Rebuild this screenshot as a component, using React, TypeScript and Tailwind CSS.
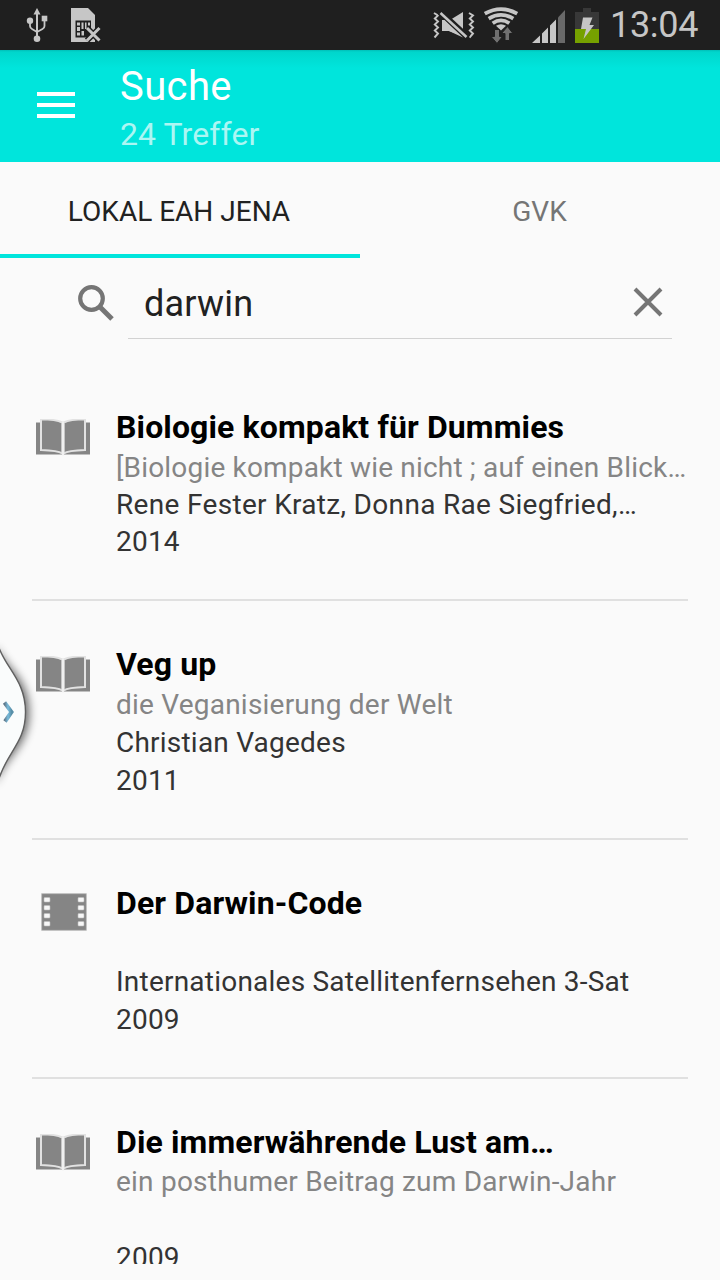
import React from "react";

type Kind = "book" | "film";
type Item = {
  kind: Kind;
  title: string;
  subtitle: string;
  author: string;
  year: string;
  compact?: boolean;
};

const items: Item[] = [
  {
    kind: "book",
    title: "Biologie kompakt für Dummies",
    subtitle: "[Biologie kompakt wie nicht ; auf einen Blick…",
    author: "Rene Fester Kratz, Donna Rae Siegfried,…",
    year: "2014",
    compact: true,
  },
  { kind: "book", title: "Veg up", subtitle: "die Veganisierung der Welt", author: "Christian Vagedes", year: "2011" },
  { kind: "film", title: "Der Darwin-Code", subtitle: "", author: "Internationales Satellitenfernsehen 3-Sat", year: "2009" },
  { kind: "book", title: "Die immerwährende Lust am…", subtitle: "ein posthumer Beitrag zum Darwin-Jahr", author: "", year: "2009" },
];

function BookIcon() {
  return (
    <svg width="56" height="38" viewBox="0 0 56 38" fill="#858585">
      <path d="M1 3.500H6V31H22L27.500 33.500V35.500H1Z" />
      <path d="M55 3.500H50V31H34L28.500 33.500V35.500H55Z" />
      <g stroke="#e2e2e2" strokeWidth="2">
        <path d="M6 .3Q21 .3 27.300 3.500V34.500Q23 31.500 6 31Z" />
        <path d="M50 .3Q35 .3 28.700 3.500V34.500Q33 31.500 50 31Z" />
      </g>
      <path d="M28 3V36" stroke="#f2f2f2" strokeWidth="1.800" />
    </svg>
  );
}

function FilmIcon() {
  return (
    <svg width="46" height="38" viewBox="0 0 46 38">
      <rect x=".7" y=".7" width="44.600" height="36.600" fill="#858585" stroke="#bdbdbd" strokeWidth=".8" />
      <g fill="#f7f7f7" stroke="#bcbcbc" strokeWidth=".6">
        {[4.5, 12.5, 20.5, 28.5].map((y) => (
          <React.Fragment key={y}>
            <rect x="3" y={y} width="6" height="4.500" rx=".8" />
            <rect x="37" y={y} width="6" height="4.500" rx=".8" />
          </React.Fragment>
        ))}
      </g>
    </svg>
  );
}

function StatusBar() {
  return (
    <div className="flex h-[50px] shrink-0 items-center bg-[#1f1f1f]">
      <svg width="120" height="50" viewBox="0 0 120 50" fill="#c6c6c6">
        <g stroke="#c6c6c6" strokeWidth="1.800" fill="none">
          <path d="M37 13V37" strokeWidth="2" />
          <path d="M30 21V26Q30 28 32 29L37 32L42.500 29Q44.500 28 44.500 26V19" />
        </g>
        <path d="M37 8L40.500 14.500H33.500Z" />
        <circle cx="30" cy="20.700" r="3.200" />
        <rect x="41.700" y="15.700" width="5.600" height="5.600" />
        <circle cx="37" cy="38.700" r="3.300" />
        <path d="M71 8H88L95 15V42H71Z" />
        <path d="M75.500 20.500H91V37.500H75.500Z" fill="#1f1f1f" />
        <path d="M77 22.500H80V25.500H77ZM77 27H80V31H77ZM77 32.500H80V35.500H77ZM81.500 22.500H83.500V29H81.500ZM85 22.500H86.500V29H85ZM88 22.500H90V25.500H88ZM81.500 31H84V35.500H81.500Z" />
        <path d="M87 28L99.500 40.500M99.500 28L87 40.500" stroke="#1f1f1f" strokeWidth="6" />
        <path d="M87 28L99.500 40.500M99.500 28L87 40.500" stroke="#c6c6c6" strokeWidth="3" />
      </svg>
      <svg className="ml-auto" width="190" height="50" viewBox="420 0 190 50" fill="#c6c6c6">
        <g fill="none" stroke="#c6c6c6" strokeWidth="1.900">
          <path d="M434 13L438 15.500L434.800 18.500L438 21.500L434.800 24.500L438 27.500L434.800 30.500L438 33.500L434.500 37.500" />
          <path d="M469 13L473 15.500L469.800 18.500L473 21.500L469.800 24.500L473 27.500L469.800 30.500L473 33.500L469.500 37.500" />
        </g>
        <path d="M442 20H450L463 12V36L449 31H442Z" />
        <path d="M440 12L468 38" stroke="#1f1f1f" strokeWidth="6.500" />
        <path d="M440.500 13L466.500 37" stroke="#c6c6c6" strokeWidth="2.500" />
        <path d="M442 20V31H449L463 37.500L444.500 20Z" />
        <g fill="none" stroke="#c6c6c6" strokeWidth="3.800">
          <path d="M484.800 13.700Q501 4.500 517.200 13.700" />
          <path d="M488.700 18.600Q501 11 513.300 18.600" />
          <path d="M492.700 23.200Q501 17.500 509.300 23.200" />
        </g>
        <path d="M496 25.800Q501 22.800 506 25.800L501 30.500Z" />
        <g fill="#707070" stroke="#1f1f1f" strokeWidth="1">
          <path d="M494.500 29.500H499.500V36.500H502.500L497 43.500L491 36.500H494.500Z" />
          <path d="M505 40.500V33.500H501.500L507.500 26.500L513 33.500H509.500V40.500Z" />
        </g>
        <path d="M532 43L540 35.500V43ZM542 33.500L548 27.500V43H542ZM550 25.500L556 19.500V43H550Z" />
        <path d="M558 17.500L565 10V43H558Z" fill="#696969" />
        <path d="M583 8H591V12H599V29H575V12H583Z" fill="#383838" />
        <rect x="575" y="29" width="24" height="14" fill="#76a100" />
        <path d="M583 17.500H592.500L589.500 25H594L583.500 39L586 29H581Z" />
      </svg>
      <span className="w-[110px] whitespace-nowrap text-[36px] leading-[50px] tracking-[-0.3px] text-[#c6c6c6]">13:04</span>
    </div>
  );
}

export default function App() {
  return (
    <div className="relative flex h-[1280px] w-[720px] flex-col overflow-hidden bg-[#fafafa] font-['Roboto',sans-serif]">
      <StatusBar />
      <header className="flex h-[112px] shrink-0 bg-[linear-gradient(to_bottom,#00bfb7_0,#00d6cc_2px,#00dcd2_8px,#00e5dc_18px)]">
        <button className="flex w-[120px] flex-col gap-[7px] pl-[37px] pt-[42px]" aria-label="Menu">
          <span className="h-1 w-[38px] bg-white" />
          <span className="h-1 w-[38px] bg-white" />
          <span className="h-1 w-[38px] bg-white" />
        </button>
        <div className="pt-[13px]">
          <h1 className="h-[47px] text-[40px] leading-[48px] font-normal tracking-[0.4px] text-white">Suche</h1>
          <p className="text-[32px] leading-[48px] tracking-[0.1px] text-[#acf6f3]">24 Treffer</p>
        </div>
      </header>

      <nav className="grid h-24 shrink-0 grid-cols-2 text-[28px]">
        <button className="border-b-4 border-[#00e5dc] pr-[2px] pt-[8px] text-[#212121]">LOKAL EAH JENA</button>
        <button className="border-b-4 border-transparent pr-[1px] pt-[8px] text-[#757575]">GVK</button>
      </nav>

      <div className="flex h-[106px] shrink-0 items-start pr-12">
        <div className="w-32 pl-[78px] pt-[27px]">
          <svg width="37" height="36" viewBox="0 0 37 36" fill="none" stroke="#757575">
            <circle cx="13.500" cy="13.500" r="11.300" strokeWidth="4.200" />
            <path d="M21.500 21.500L34 34" strokeWidth="5" />
          </svg>
        </div>
        <div className="flex h-[81px] flex-1 justify-between border-b border-[#d2d2d2] pl-4 pr-2">
          <span className="pt-[23px] text-[36px] leading-[46px] tracking-[0.2px] text-[#212121]">darwin</span>
          <svg className="mt-[28px]" width="32" height="32" viewBox="0 0 32 32" stroke="#757575" strokeWidth="4">
            <path d="M3 3L29 29M29 3L3 29" />
          </svg>
        </div>
      </div>

      <main className="mb-4 min-h-0 flex-1 overflow-hidden px-8">
        {items.map((it) => (
          <article
            key={it.title}
            className={`flex border-b-2 border-[#e0e0e0] pt-[43px] ${it.compact ? "pb-[39px]" : "pb-[38px]"}`}
          >
            <div className="w-[84px] shrink-0">
              {it.kind === "book" ? (
                <div className="pl-[3px] pt-[12px]"><BookIcon /></div>
              ) : (
                <div className="pl-[9px] pt-[10px]"><FilmIcon /></div>
              )}
            </div>
            <div className="whitespace-nowrap text-[28px] tracking-[0.22px] text-[#333]">
              <h2
                className={`text-[32px] leading-[40px] font-bold tracking-[0.12px] text-black ${it.author ? "h-[42px]" : "h-[41px]"}`}
              >
                {it.title}
              </h2>
              <p className={it.compact ? "h-[37px] leading-[38px] tracking-[0.18px] text-[#858585]" : "h-[38px] leading-[38px] text-[#858585]"}>
                {it.subtitle}
              </p>
              <p className={it.compact ? "h-[37px] leading-[37px] tracking-[0.32px]" : "h-[38px] leading-[38px]"}>{it.author}</p>
              <p className={it.compact ? "h-[37px] leading-[37px]" : "h-[38px] leading-[38px]"}>{it.year}</p>
            </div>
          </article>
        ))}
      </main>

      <svg className="absolute left-0 top-[630px]" width="50" height="165" viewBox="0 0 50 165">
        <defs>
          <filter id="soft" x="-50%" y="-20%" width="200%" height="140%">
            <feGaussianBlur stdDeviation="5" />
          </filter>
          <linearGradient id="arrow" x1="0" x2="1">
            <stop offset="0" stopColor="#60788a" />
            <stop offset=".5" stopColor="#79bcdc" />
            <stop offset="1" stopColor="#588fa8" />
          </linearGradient>
        </defs>
        <path d="M-5 15C2 35 29 46 29 82C29 118 4 126 -5 155Z" fill="#000" opacity=".6" filter="url(#soft)" />
        <path d="M-2 15C5 38 25.500 50 25.500 82C25.500 114 6 122 -2 152Z" fill="#fafcfc" stroke="#606060" strokeWidth="1.400" />
        <path d="M4.500 72.500L11.500 82L5 91.500" fill="none" stroke="url(#arrow)" strokeWidth="4" />
      </svg>
    </div>
  );
}
